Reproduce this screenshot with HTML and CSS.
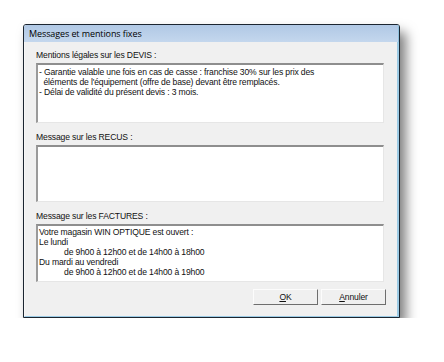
FILE: index.html
```html
<!DOCTYPE html>
<html lang="fr">
<head>
    <meta charset="UTF-8">
    <title>Messages et mentions fixes</title>
    <link rel="stylesheet" href="styles.css">
</head>
<body>
    <div class="dialog">
        <div class="titlebar">Messages et mentions fixes</div>
        <div class="content">
            <div class="label">Mentions légales sur les DEVIS :</div>
            <div class="memo memo-devis">
                <div>- Garantie valable une fois en cas de casse : franchise 30% sur les prix des</div>
                <div>&nbsp;&nbsp;éléments de l'équipement (offre de base) devant être remplacés.</div>
                <div>- Délai de validité du présent devis : 3 mois.</div>
            </div>

            <div class="label">Message sur les RECUS :</div>
            <div class="memo memo-recus"></div>

            <div class="label">Message sur les FACTURES :</div>
            <div class="memo memo-factures">
                <div>Votre magasin WIN OPTIQUE est ouvert :</div>
                <div>Le lundi</div>
                <div class="indent">de 9h00 à 12h00 et de 14h00 à 18h00</div>
                <div>Du mardi au vendredi</div>
                <div class="indent">de 9h00 à 12h00 et de 14h00 à 19h00</div>
            </div>

            <div class="buttons">
                <button class="btn"><u>O</u>K</button>
                <button class="btn"><u>A</u>nnuler</button>
            </div>
        </div>
    </div>
</body>
</html>
```

FILE: styles.css
```css
body {
    margin: 0;
    background-color: #ffffff;
    font-family: "Liberation Sans", Arial, sans-serif;
    font-size: 8.6px;
    letter-spacing: -0.15px;
    color: #111;
}
.dialog {
    margin: 24px 0 0 23px;
    width: 377px;
    height: 294px;
    box-sizing: border-box;
    display: flex;
    flex-direction: column;
    border: 1px solid #1b2530;
    border-radius: 3px 3px 0 0;
    background-color: #f0f0f0;
    box-shadow: 6px 8px 12px rgba(0, 0, 0, 0.5);
}
.titlebar {
    height: 17px;
    padding-left: 5px;
    line-height: 18px;
    font-family: "Open Sans", "Noto Sans", sans-serif;
    font-size: 9px;
    letter-spacing: -0.1px;
    color: #000;
    background: linear-gradient(#b0c8e5, #c4d7ed);
    border-radius: 2px 2px 0 0;
    box-shadow: inset -1px 0 0 #8fc0dc;
}
.content {
    flex: 1;
    padding: 5px 13px 0 11px;
    border-left: 1px solid #f7f7f7;
    border-right: 2px solid #9ccbe5;
    border-bottom: 1px solid #9ccbe5;
    display: flex;
    flex-direction: column;
}
.label {
    line-height: 12px;
    margin-top: 2px;
    margin-bottom: 2px;
}
.memo-recus + .label,
.memo-devis + .label {
    margin-top: 8px;
}
.memo {
    box-sizing: border-box;
    background-color: #fff;
    border-top: 2px solid #8e8e8e;
    border-left: 2px solid #9a9a9a;
    border-right: 1px solid #e6e6e6;
    border-bottom: 1px solid #e6e6e6;
    padding: 2px 2px 0 1px;
    line-height: 10px;
    overflow: hidden;
}
.memo-devis {
    height: 60px;
}
.memo-recus {
    height: 57px;
}
.memo-factures {
    height: 58px;
    padding-top: 1px;
}
.indent {
    padding-left: 25px;
}
.buttons {
    display: flex;
    justify-content: flex-end;
    gap: 3px;
    margin-top: 7px;
    margin-right: -2px;
}
.btn {
    width: 65px;
    height: 16px;
    padding: 0;
    font-family: "Liberation Sans", Arial, sans-serif;
    font-size: 8.6px;
    letter-spacing: -0.15px;
    color: #111;
    background-color: #f0f0f0;
    border: 1px solid;
    border-color: #fcfcfc #6e6e6e #6e6e6e #fcfcfc;
    border-radius: 0;
}
```
